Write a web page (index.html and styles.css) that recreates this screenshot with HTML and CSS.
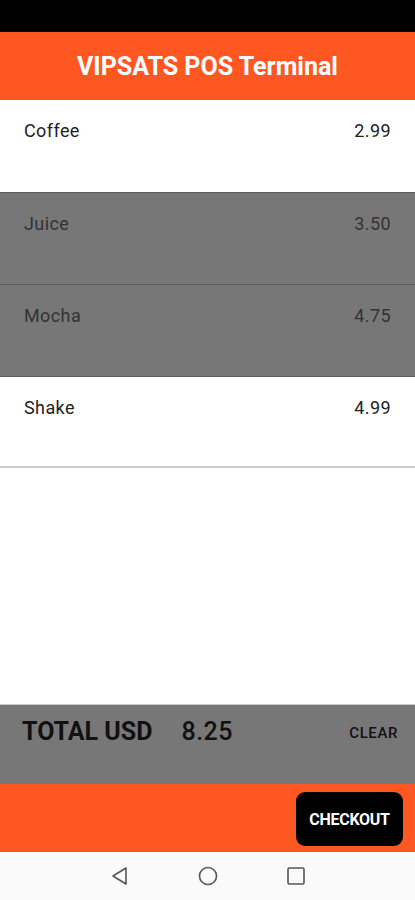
FILE: index.html
```html
<!DOCTYPE html>
<html lang="en">
<head>
    <meta charset="UTF-8">
    <meta name="viewport" content="width=device-width, initial-scale=1.0">
    <title>VIPSATS POS Terminal</title>
    <link rel="stylesheet" href="styles.css">
</head>
<body>
    <div class="screen">
        <div class="status-bar"></div>

        <header class="app-bar">
            <h1>VIPSATS POS Terminal</h1>
        </header>

        <!-- Lista de productos -->
        <ul class="item-list">
            <li class="item"><span>Coffee</span><span>2.99</span></li>
            <li class="item selected"><span>Juice</span><span>3.50</span></li>
            <li class="item selected"><span>Mocha</span><span>4.75</span></li>
            <li class="item last"><span>Shake</span><span>4.99</span></li>
        </ul>

        <div class="total-bar">
            <div class="total">
                <span class="total-label">TOTAL USD</span>
                <span class="total-value">8.25</span>
            </div>
            <button class="clear-button">CLEAR</button>
        </div>

        <div class="checkout-bar">
            <button class="checkout-button">CHECKOUT</button>
        </div>

        <nav class="nav-bar">
            <svg width="22" height="22" viewBox="0 0 22 22"><path d="M17 3 L4 11 L17 19 Z" fill="none" stroke="#555" stroke-width="1.6" stroke-linejoin="round"/></svg>
            <svg width="22" height="22" viewBox="0 0 22 22"><circle cx="11" cy="11" r="8.5" fill="none" stroke="#555" stroke-width="1.6"/></svg>
            <svg width="22" height="22" viewBox="0 0 22 22"><rect x="3" y="3" width="16" height="16" rx="1.5" fill="none" stroke="#555" stroke-width="1.6"/></svg>
        </nav>
    </div>
</body>
</html>
```

FILE: styles.css
```css
body {
    margin: 0;
    font-family: Roboto, "Liberation Sans", Arial, sans-serif;
    background: #fff;
}
.screen {
    width: 415px;
    height: 900px;
    display: flex;
    flex-direction: column;
}
.status-bar {
    height: 32px;
    background: #000;
}
.app-bar {
    height: 68px;
    background: #ff5722;
    display: flex;
    align-items: center;
    justify-content: center;
}
.app-bar h1 {
    margin: 0;
    color: #fff;
    font-size: 25px;
    font-weight: 700;
}
.item-list {
    list-style-type: none;
    margin: 0;
    padding: 0;
    flex: 1;
}
.item {
    height: 92px;
    box-sizing: border-box;
    padding: 20px 24px 0 24px;
    display: flex;
    justify-content: space-between;
    font-size: 18px;
    letter-spacing: 0.4px;
    color: #222;
    background: #fff;
}
.item.selected {
    background: #777;
    color: #333;
    border-top: 1px solid #5c5c5c;
}
.item.last {
    border-top: 1px solid #5c5c5c;
    border-bottom: 2px solid #ccc;
}
.total-bar {
    height: 80px;
    box-sizing: border-box;
    background: #777;
    border-top: 1px solid #ccc;
    padding: 12px 17px 0 22px;
    display: flex;
    justify-content: space-between;
    align-items: flex-start;
}
.total {
    display: flex;
    gap: 29px;
    color: #111;
    font-size: 25px;
}
.total-label {
    font-weight: 700;
}
.total-value {
    font-weight: 500;
    letter-spacing: 0.5px;
}
.clear-button {
    background: none;
    border: none;
    padding: 7px 0 0 0;
    font-family: inherit;
    font-size: 15px;
    font-weight: 500;
    letter-spacing: 0.6px;
    color: #111;
}
.checkout-bar {
    height: 68px;
    background: #ff5722;
    display: flex;
    align-items: center;
    justify-content: flex-end;
    padding-right: 12px;
}
.checkout-button {
    width: 107px;
    height: 54px;
    margin-top: 2px;
    background: #000;
    color: #fff;
    border: none;
    border-radius: 9px;
    font-family: inherit;
    font-size: 16px;
    font-weight: 700;
    letter-spacing: -0.3px;
}
.nav-bar {
    height: 48px;
    background: #fafafa;
    display: flex;
    align-items: center;
    justify-content: center;
    gap: 66px;
}
```
